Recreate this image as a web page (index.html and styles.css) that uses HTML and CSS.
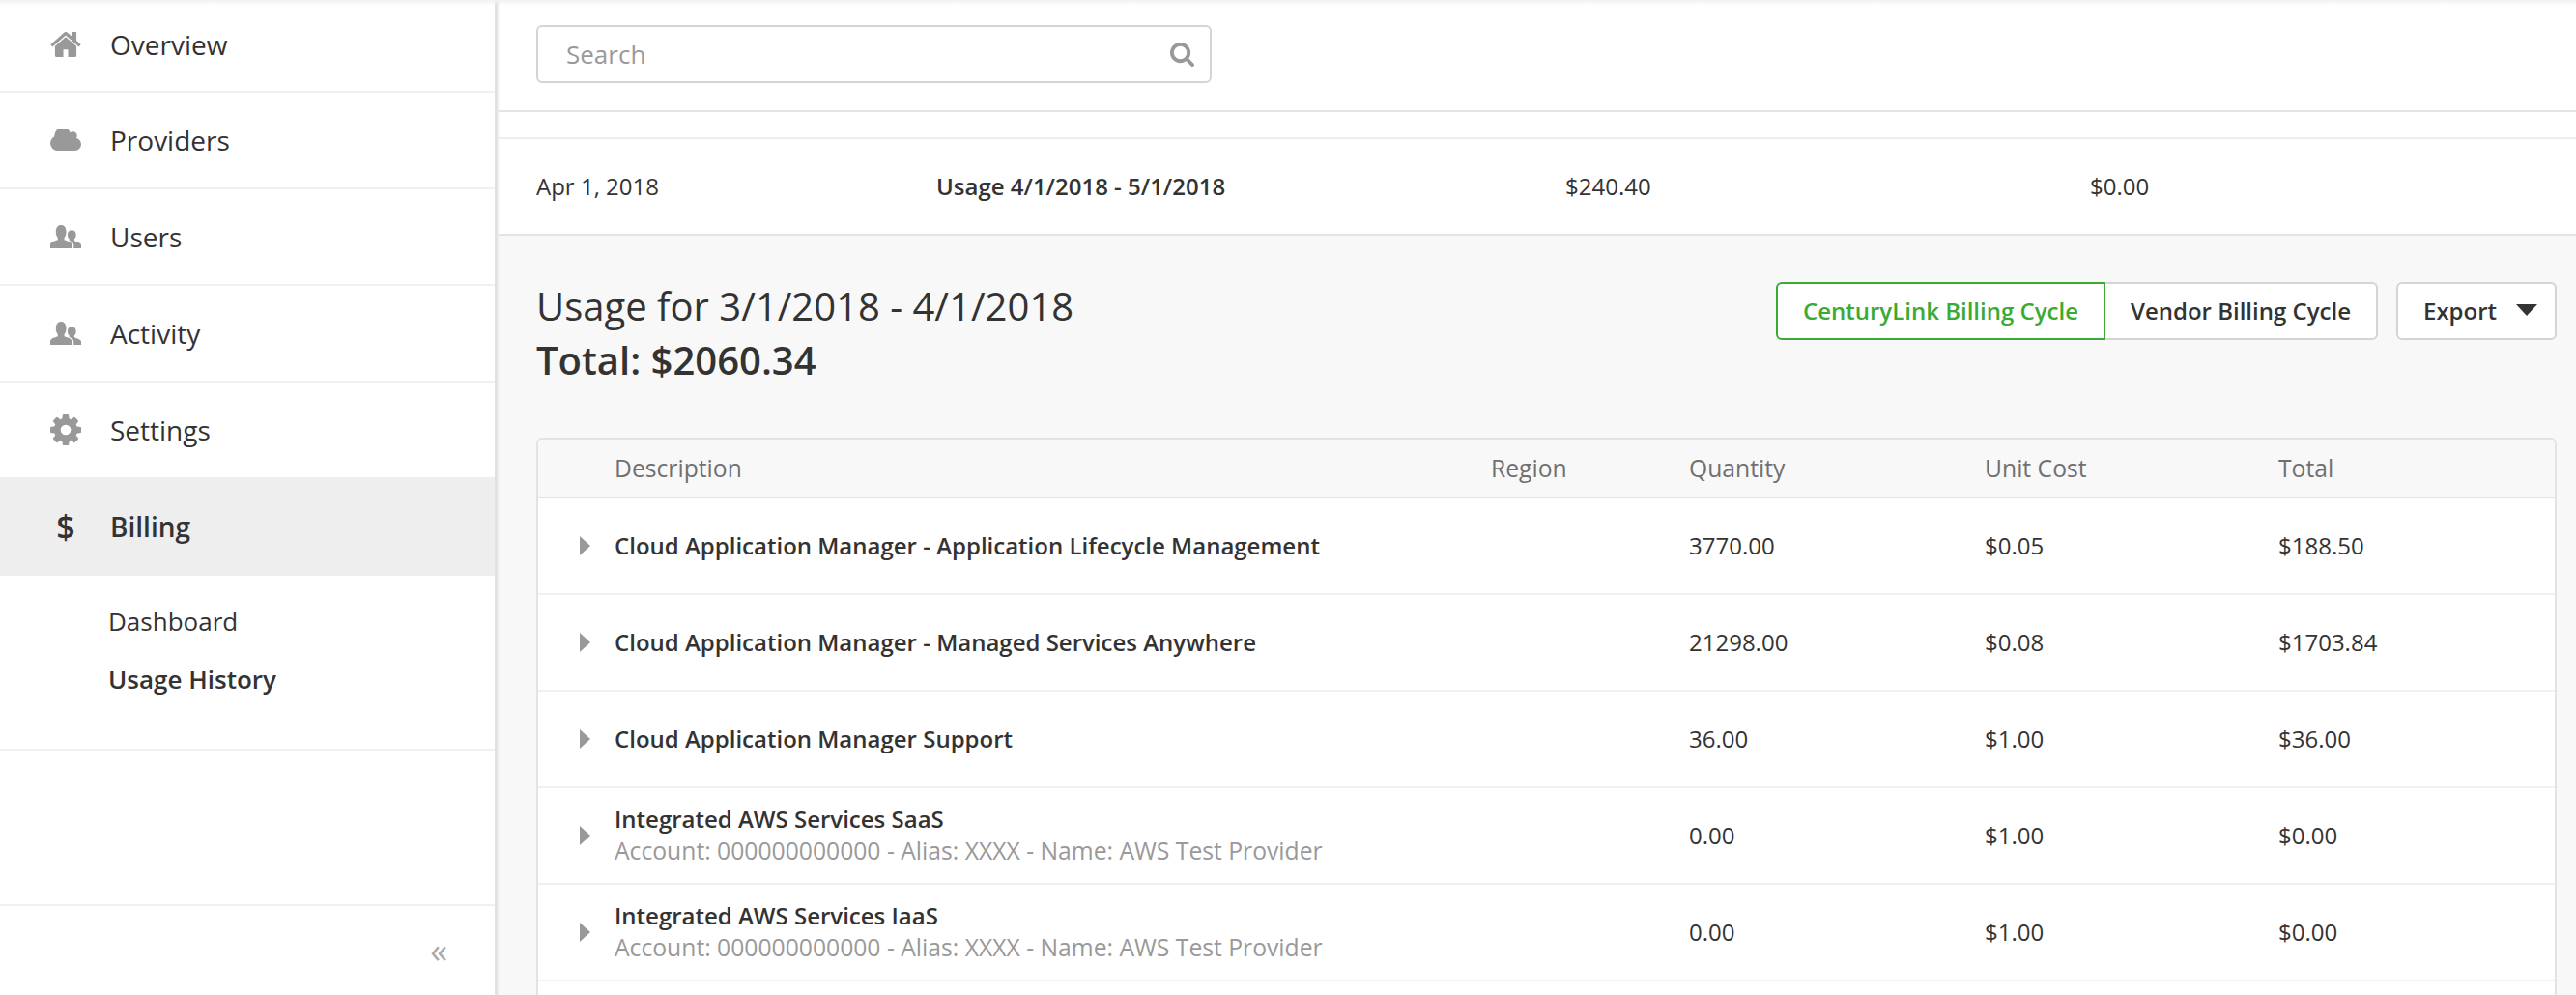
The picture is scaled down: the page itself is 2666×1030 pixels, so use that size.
FILE: index.html
```html
<!DOCTYPE html>
<html lang="en">
<head>
<meta charset="utf-8">
<title>Usage History</title>
<link rel="stylesheet" href="styles.css">
</head>
<body>
<div class="app">
  <aside class="sidebar">
    <nav class="nav">
      <a class="nav-item first"><svg class="ico ico-home" viewBox="64 256 1664 1280" preserveAspectRatio="none"><path d="M1472 992v480q0 26-19 45t-45 19h-384v-384h-256v384h-384q-26 0-45-19t-19-45v-480q0-1 .5-3t.5-3l575-474 575 474q1 2 1 6zm223-69l-62 74q-8 9-21 11h-3q-13 0-21-7l-692-577-692 577q-12 8-24 7-13-2-21-11l-62-74q-8-10-7-23.5t11-21.5l719-599q32-26 76-26t76 26l244 204v-195q0-14 9-23t23-9h192q14 0 23 9t9 23v408l219 182q10 8 11 21.5t-7 23.5z"/></svg><span>Overview</span></a>
      <a class="nav-item"><svg class="ico ico-cloud" viewBox="0 256 1920 1280" preserveAspectRatio="none"><path d="M1920 1152q0 159-112.5 271.5t-271.5 112.5h-1088q-185 0-316.5-131.5t-131.5-316.5q0-132 71-241.5t187-163.5q-2-28-2-43 0-212 150-362t362-150q158 0 286.5 88t187.5 230q70-62 166-62 106 0 181 75t75 181q0 75-41 138 129 30 213 134.5t84 239.5z"/></svg><span>Providers</span></a>
      <a class="nav-item"><svg class="ico ico-users" viewBox="0 0 33 23" preserveAspectRatio="none"><path d="M0 23V19.500C0 17.500 2 16.500 4.500 15.800L8 14.500V12.500C6.500 11 6 9 6 6.500C6 2.500 8.200 0 11.500 0C14.800 0 17 2.500 17 6.500C17 9 16.500 11 15 12.500V14.500L18.500 15.800C21 16.500 23 17.500 23 19.500V23Z"/><path d="M25 23V20C25 17.800 23.500 16.500 21.500 15.700L20.300 15.300V14C19 13 18.500 11.500 18.500 9.700C18.500 6.800 20.300 5 23 5C25.700 5 27.500 6.800 27.500 9.700C27.500 11.500 27 13 25.700 14V15.500L29 16.800C31.500 17.700 33 18.500 33 20V23Z"/></svg><span>Users</span></a>
      <a class="nav-item"><svg class="ico ico-users" viewBox="0 0 33 23" preserveAspectRatio="none"><path d="M0 23V19.500C0 17.500 2 16.500 4.500 15.800L8 14.500V12.500C6.500 11 6 9 6 6.500C6 2.500 8.200 0 11.500 0C14.800 0 17 2.500 17 6.500C17 9 16.500 11 15 12.500V14.500L18.500 15.800C21 16.500 23 17.500 23 19.500V23Z"/><path d="M25 23V20C25 17.800 23.500 16.500 21.500 15.700L20.300 15.300V14C19 13 18.500 11.500 18.500 9.700C18.500 6.800 20.300 5 23 5C25.700 5 27.500 6.800 27.500 9.700C27.500 11.500 27 13 25.700 14V15.500L29 16.800C31.500 17.700 33 18.500 33 20V23Z"/></svg><span>Activity</span></a>
      <a class="nav-item"><svg class="ico ico-gear" viewBox="128 128 1536 1536"><path d="M1152 896q0-106-75-181t-181-75-181 75-75 181 75 181 181 75 181-75 75-181zm512-109v222q0 12-8 23t-20 13l-185 28q-19 54-39 91 35 50 107 138 10 12 10 25t-9 23q-27 37-99 108t-94 71q-12 0-26-9l-138-108q-44 23-91 38-16 136-29 186-7 28-36 28h-222q-14 0-24.500-8.500t-11.500-21.500l-28-184q-49-16-90-37l-141 107q-10 9-25 9-14 0-25-11-126-114-165-168-7-10-7-23 0-12 8-23 15-21 51-66.500t54-70.500q-27-50-41-99l-183-27q-13-2-21-12.500t-8-23.500v-222q0-12 8-23t19-13l186-28q14-46 39-92-40-57-107-138-10-12-10-24 0-10 9-23 26-36 98.500-107.500t94.500-71.500q13 0 26 10l138 107q44-23 91-38 16-136 29-186 7-28 36-28h222q14 0 24.500 8.500t11.500 21.500l28 184q49 16 90 37l142-107q9-9 24-9 13 0 25 10 129 119 165 170 7 8 7 22 0 12-8 23-15 21-51 66.500t-54 70.500q26 50 41 98l183 28q13 2 21 12.500t8 23.500z"/></svg><span>Settings</span></a>
      <a class="nav-item active"><span class="dollar">$</span><span>Billing</span></a>
    </nav>
    <div class="subnav">
      <a class="sub-item">Dashboard</a>
      <a class="sub-item current">Usage History</a>
    </div>
    <div class="spacer"></div>
    <div class="collapse"><span class="chev">«</span></div>
  </aside>
  <main class="main">
    <div class="searchbar">
      <div class="search">
        <span class="placeholder">Search</span>
        <svg class="search-ico" viewBox="0 128 1728 1664"><path d="M1216 832q0-185-131.500-316.500t-316.500-131.500-316.500 131.500-131.500 316.500 131.500 316.500 316.500 131.500 316.500-131.500 131.500-316.500zm512 832q0 52-38 90t-90 38q-54 0-90-38l-343-342q-179 124-399 124-143 0-273.500-55.500t-225-150-150-225-55.500-273.500 55.500-273.500 150-225 225-150 273.500-55.500 273.500 55.500 225 150 150 225 55.500 273.500q0 220-124 399l343 343q37 37 37 90z"/></svg>
      </div>
    </div>
    <div class="gap-band"></div>
    <div class="invoice-row">
      <span class="inv-date">Apr 1, 2018</span>
      <span class="inv-name">Usage 4/1/2018 - 5/1/2018</span>
      <span class="inv-amt">$240.40</span>
      <span class="inv-amt2">$0.00</span>
    </div>
    <section class="detail">
      <div class="detail-head">
        <div class="titles">
          <div class="title">Usage for 3/1/2018 - 4/1/2018</div>
          <div class="total">Total: $2060.34</div>
        </div>
        <div class="actions">
          <button class="seg seg-on">CenturyLink Billing Cycle</button>
          <button class="seg seg-off">Vendor Billing Cycle</button>
          <button class="export">Export<span class="caret"></span></button>
        </div>
      </div>
      <div class="table">
        <div class="row head">
          <span></span><span>Description</span><span>Region</span><span>Quantity</span><span>Unit Cost</span><span>Total</span>
        </div>
        <div class="row">
          <span class="arrow"></span><span class="name">Cloud Application Manager - Application Lifecycle Management</span><span></span><span>3770.00</span><span>$0.05</span><span>$188.50</span>
        </div>
        <div class="row">
          <span class="arrow"></span><span class="name">Cloud Application Manager - Managed Services Anywhere</span><span></span><span>21298.00</span><span>$0.08</span><span>$1703.84</span>
        </div>
        <div class="row">
          <span class="arrow"></span><span class="name">Cloud Application Manager Support</span><span></span><span>36.00</span><span>$1.00</span><span>$36.00</span>
        </div>
        <div class="row">
          <span class="arrow"></span><div class="desc"><div class="desc-main">Integrated AWS Services SaaS</div><div class="desc-sub">Account: 000000000000 - Alias: XXXX - Name: AWS Test Provider</div></div><span></span><span>0.00</span><span>$1.00</span><span>$0.00</span>
        </div>
        <div class="row">
          <span class="arrow"></span><div class="desc"><div class="desc-main">Integrated AWS Services IaaS</div><div class="desc-sub">Account: 000000000000 - Alias: XXXX - Name: AWS Test Provider</div></div><span></span><span>0.00</span><span>$1.00</span><span>$0.00</span>
        </div>
        <div class="row"></div>
      </div>
    </section>
  </main>
</div>
</body>
</html>
```
FILE: styles.css
```css
* { box-sizing: border-box; }
html, body { margin: 0; height: 100%; overflow: hidden; }
body { font-family: "Open Sans", sans-serif; color: #333; background: #fff; }
.app { display: flex; height: 1030px; position: relative; }
.app::before { content: ""; position: absolute; left: 0; right: 0; top: 0; height: 6px; background: linear-gradient(#f1f1f1, rgba(255, 255, 255, 0)); z-index: 2; pointer-events: none; }

.sidebar { width: 515px; flex: none; display: flex; flex-direction: column; background: #fff; border-right: 3px solid #e2e2e2; box-shadow: 1px 0 2px #eee; position: relative; z-index: 1; }
.nav { display: flex; flex-direction: column; }
.nav-item { height: 100px; display: flex; align-items: center; padding-left: 52px; font-size: 28px; border-bottom: 2px solid #f0f0f0; }
.nav-item.first { height: 96px; padding-bottom: 2px; }
.nav-item span:last-child { margin-left: 30px; }
.ico { width: 32px; fill: #999; flex: none; }
.ico-home { height: 26px; }
.ico-cloud { height: 22px; }
.ico-users { height: 24px; }
.ico-gear { height: 32px; }
.nav-item.active { background: #eee; border-bottom: 0; height: 102px; margin-top: -2px; font-weight: 600; }
.dollar { width: 32px; text-align: center; font-size: 34px; font-weight: 600; line-height: 1; }
.subnav { display: flex; flex-direction: column; gap: 27px; padding: 31px 0 0 112px; height: 181px; border-bottom: 2px solid #f0f0f0; font-size: 26px; }
.sub-item { line-height: 33px; }
.sub-item.current { font-weight: 600; }
.spacer { flex: 1; border-bottom: 2px solid #f0f0f0; }
.collapse { height: 92px; display: flex; justify-content: flex-end; align-items: center; padding-right: 49px; }
.chev { font-size: 36px; color: #aaa; line-height: 1; }

.main { flex: 1; min-width: 0; display: flex; flex-direction: column; }
.searchbar { height: 116px; padding: 26px 40px 0; border-bottom: 2px solid #e3e3e3; }
.search { width: 699px; height: 60px; border: 2px solid #d4d4d4; border-radius: 6px; display: flex; align-items: center; justify-content: space-between; padding: 0 16px 0 29px; font-size: 26px; color: #999; }
.search-ico { width: 26px; height: 25px; fill: #999; }
.gap-band { height: 28px; border-bottom: 2px solid #eee; }
.invoice-row { height: 100px; display: grid; grid-template-columns: 414px 651px 543px 1fr; align-items: center; padding: 0 40px 2px; font-size: 24px; border-bottom: 2px solid #e3e3e3; }
.inv-name { font-weight: 600; }

.detail { flex: 1; background: #f8f8f8; padding: 0 20px 0 40px; min-height: 0; overflow: hidden; }
.detail-head { height: 209px; display: flex; justify-content: space-between; padding-top: 45px; }
.title { font-size: 40px; line-height: 55px; }
.total { font-size: 40px; line-height: 57px; font-weight: 600; }
.actions { display: flex; align-items: flex-start; padding-top: 3px; }
.seg, .export { height: 60px; font: inherit; font-size: 24px; background: #fff; border: 2px solid #d4d4d4; color: #333; font-weight: 600; padding: 0 0 2px; }
.seg-on { width: 341px; color: #3aaa35; border-color: #3aaa35; border-radius: 6px 0 0 6px; }
.seg-off { width: 282px; border-left: 0; border-radius: 0 6px 6px 0; }
.export { width: 166px; margin-left: 19px; border-radius: 6px; display: flex; align-items: center; padding-left: 26px; }
.caret { width: 0; height: 0; border-left: 11px solid transparent; border-right: 11px solid transparent; border-top: 12px solid #333; margin-left: 20px; }

.table { border: 2px solid #e3e3e3; border-bottom: 0; border-radius: 6px 6px 0 0; background: #fff; }
.row { height: 100px; display: grid; grid-template-columns: 79px 907px 205px 306px 304px 1fr; align-items: center; padding-bottom: 2px; border-bottom: 2px solid #f0f0f0; font-size: 24px; }
.row.head { height: 61px; padding-bottom: 0; background: #f8f8f8; color: #707070; border-bottom: 2px solid #e3e3e3; border-radius: 4px 4px 0 0; font-size: 24.7px; }
.name { font-weight: 600; }
.arrow { width: 0; height: 0; margin: 2px 0 0 43px; border-top: 10px solid transparent; border-bottom: 10px solid transparent; border-left: 11px solid #999; }
.desc-main { line-height: 33px; font-weight: 600; }
.desc-sub { line-height: 33px; color: #999; font-size: 24.7px; }
```
